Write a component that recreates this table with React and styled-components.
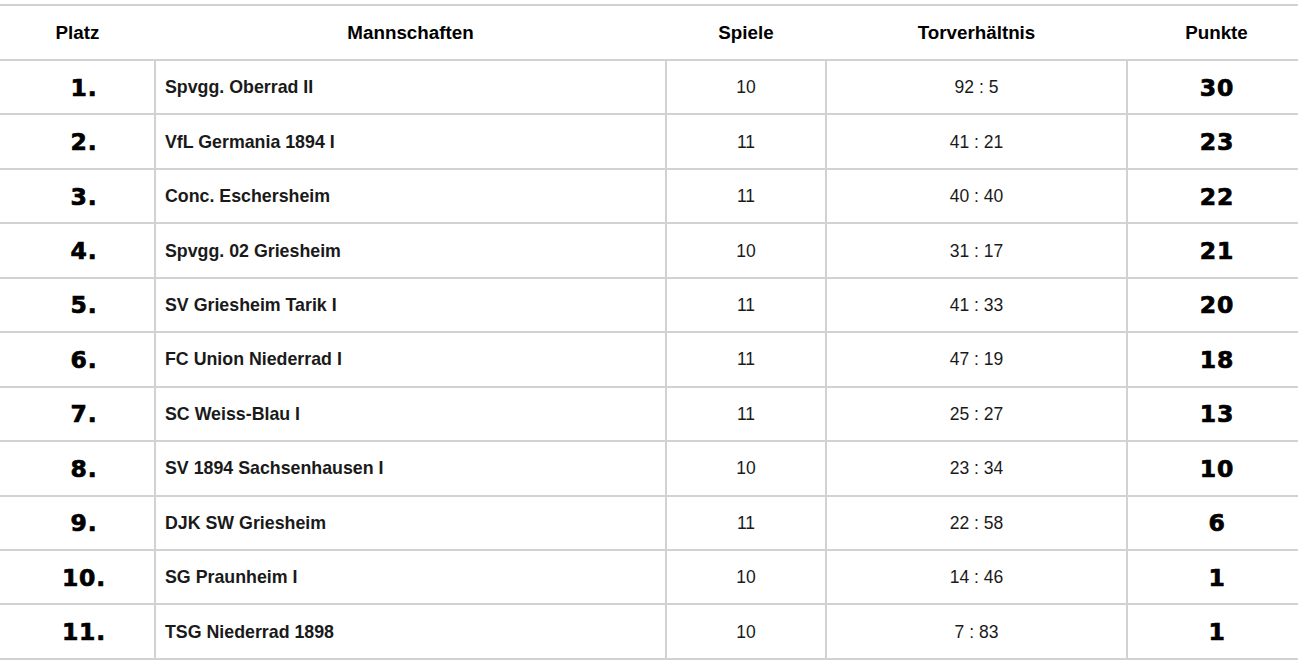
import React from 'react';
import styled, { createGlobalStyle } from 'styled-components';

const GlobalStyle = createGlobalStyle`
  html, body {
    margin: 0;
    padding: 0;
    background: #ffffff;
    overflow: hidden;
  }
  body {
    font-family: "Liberation Sans", Arial, Helvetica, sans-serif;
    color: #111;
  }
`;

const Wrapper = styled.div`
  padding-top: 4px;
`;

const Table = styled.table`
  width: 1306px;
  border-collapse: collapse;
  table-layout: fixed;
  border-top: 2px solid #d2d2d2;
`;

const HeadCell = styled.th`
  height: 53px;
  padding: 0;
  font-size: 18.8px;
  font-weight: 700;
  color: #000;
  text-align: center;
  vertical-align: middle;
  border-bottom: 2px solid #d2d2d2;
`;

const Row = styled.tr`
  height: 54.45px;
`;

const Cell = styled.td`
  padding: ${p => (p.$left ? '1px 0 0 9px' : '1px 0 0')};
  font-size: ${p => (p.$bold ? '17.8px' : '17.5px')};
  color: #1a1a1a;
  text-align: ${p => (p.$left ? 'left' : 'center')};
  font-weight: ${p => (p.$bold ? 700 : 400)};
  vertical-align: middle;
  border-bottom: 2px solid #d2d2d2;
  border-left: ${p => (p.$first ? 'none' : '2px solid #d2d2d2')};
`;

const Rank = styled(Cell)`
  padding-left: 14px;
  font-family: "DejaVu Sans", Verdana, sans-serif;
  font-weight: 700;
  font-size: 23.5px;
  color: #000;
  letter-spacing: 0.8px;
  -webkit-text-stroke: 0.7px #000;
`;

const Points = styled(Rank)`
  padding-left: 0;
`;

const teams = [
  ['Spvgg. Oberrad II', 10, '92 : 5', 30],
  ['VfL Germania 1894 I', 11, '41 : 21', 23],
  ['Conc. Eschersheim', 11, '40 : 40', 22],
  ['Spvgg. 02 Griesheim', 10, '31 : 17', 21],
  ['SV Griesheim Tarik I', 11, '41 : 33', 20],
  ['FC Union Niederrad I', 11, '47 : 19', 18],
  ['SC Weiss-Blau I', 11, '25 : 27', 13],
  ['SV 1894 Sachsenhausen I', 10, '23 : 34', 10],
  ['DJK SW Griesheim', 11, '22 : 58', 6],
  ['SG Praunheim I', 10, '14 : 46', 1],
  ['TSG Niederrad 1898', 10, '7 : 83', 1],
];

export default function App() {
  return (
    <Wrapper>
      <GlobalStyle />
      <Table>
        <colgroup>
          <col style={{ width: 155 }} />
          <col style={{ width: 511 }} />
          <col style={{ width: 160 }} />
          <col style={{ width: 301 }} />
          <col />
        </colgroup>
        <thead>
          <tr>
            <HeadCell>Platz</HeadCell>
            <HeadCell>Mannschaften</HeadCell>
            <HeadCell>Spiele</HeadCell>
            <HeadCell>Torverhältnis</HeadCell>
            <HeadCell>Punkte</HeadCell>
          </tr>
        </thead>
        <tbody>
          {teams.map(([name, games, goals, pts], i) => (
            <Row key={name}>
              <Rank $first>{i + 1}.</Rank>
              <Cell $left $bold>{name}</Cell>
              <Cell>{games}</Cell>
              <Cell>{goals}</Cell>
              <Points>{pts}</Points>
            </Row>
          ))}
        </tbody>
      </Table>
    </Wrapper>
  );
}
